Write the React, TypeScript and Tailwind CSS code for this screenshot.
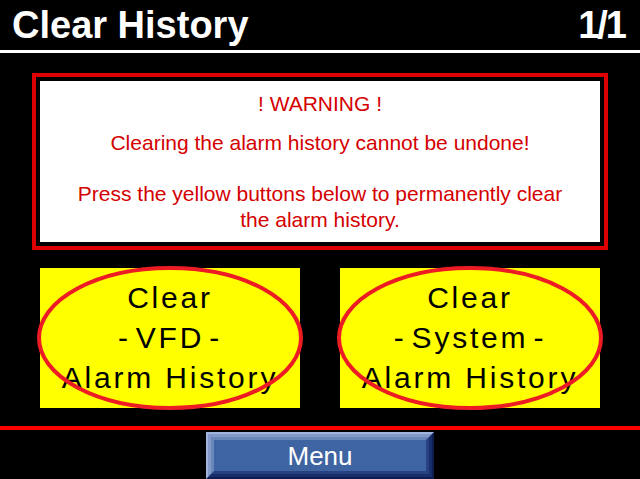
const sans = '"Liberation Sans", Arial, sans-serif';

function Ring() {
  // red freehand-style ellipse drawn over the button
  return (
    <svg
      className="pointer-events-none absolute -left-[3px] -top-[2px]"
      width={266}
      height={144}
      viewBox="0 0 266 144"
    >
      <ellipse cx={133} cy={72} rx={131} ry={70} fill="none" stroke="#ed1c24" strokeWidth={4} />
    </svg>
  );
}

function ClearButton({ label }: { label: string }) {
  return (
    <div className="relative flex h-[140px] w-[260px] flex-col items-center justify-center bg-[#ffff00] text-[30px] leading-[40px] tracking-[2.8px] text-black">
      <span>Clear</span>
      <span>
        <span className="mr-[5px]">-</span>
        {label}
        <span className="ml-[5px]">-</span>
      </span>
      <span>Alarm History</span>
      <Ring />
    </div>
  );
}

export default function App() {
  return (
    <div className="flex h-[479px] w-[640px] flex-col overflow-hidden bg-black" style={{ fontFamily: sans }}>
      <div className="flex h-[50px] items-start justify-between pl-3 pr-[15px] text-[38px] font-bold leading-[50px] text-white">
        <span>Clear History</span>
        <span className="tracking-[-2px]">1/1</span>
      </div>
      <div className="h-[3px] bg-white" />

      <div className="mx-8 mt-5 border-4 border-[#dd0000] bg-black p-1">
        <div className="flex h-[161px] flex-col items-center bg-white pt-[10px] text-center text-[21px] leading-[26px] text-[#d40000]">
          <p>! WARNING !</p>
          <p className="mt-[13px]">Clearing the alarm history cannot be undone!</p>
          <p className="mt-[25px]">Press the yellow buttons below to permanently clear</p>
          <p>the alarm history.</p>
        </div>
      </div>

      <div className="mt-[18px] flex justify-between px-10">
        <ClearButton label="VFD" />
        <ClearButton label="System" />
      </div>

      <div className="mt-[18px] h-1 bg-[#ff0000]" />

      <div className="mt-[2px] flex justify-center">
        <div className="h-[47px] w-[228px] border-2 border-t-[#a2b5dc] border-l-[#a2b5dc] border-r-[#0e1d52] border-b-[#0e1d52]">
          <div className="h-full w-full border-[3px] border-t-[#8399c9] border-l-[#8399c9] border-r-[#182d6b] border-b-[#182d6b]">
            <div className="h-full w-full border-[3px] border-t-[#6a87bc] border-l-[#6a87bc] border-r-[#284281] border-b-[#284281]">
              <div className="flex h-full w-full items-center justify-center bg-[#3f64a2] text-[26px] leading-none text-white">
                Menu
              </div>
            </div>
          </div>
        </div>
      </div>
    </div>
  );
}
